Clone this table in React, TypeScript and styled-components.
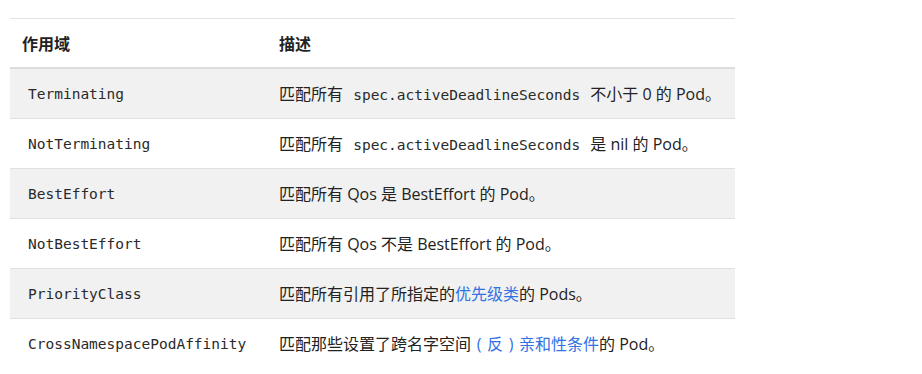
import React from 'react';
import styled, { createGlobalStyle } from 'styled-components';

const GlobalStyle = createGlobalStyle`
  body {
    margin: 0;
    background: #fff;
    color: #222;
    font-family: "Open Sans", "Noto Sans CJK SC", sans-serif;
    font-size: 16px;
  }
`;

const Page = styled.div`
  padding: 18px 0 0 10px;
`;

const Table = styled.table`
  width: 725px;
  border-collapse: collapse;
  border-top: 1px solid #e3e3e6;
`;

const HeadCell = styled.th`
  height: 48px;
  padding: 0 12px;
  text-align: left;
  font-weight: 700;
  border-bottom: 2px solid #dcdde1;
  vertical-align: middle;
`;

const Row = styled.tr<{ $striped: boolean; $last: boolean }>`
  background: ${p => (p.$striped ? '#f1f1f1' : '#fff')};
  border-bottom: 1px solid ${p => (p.$last ? 'transparent' : '#dfe0e3')};
`;

const Cell = styled.td<{ $first?: boolean }>`
  height: 48px;
  padding: 0 12px 1px;
  vertical-align: middle;
  width: ${p => (p.$first ? '233px' : 'auto')};
  white-space: nowrap;
`;

const Code = styled.code`
  font-family: "DejaVu Sans Mono", monospace;
  font-size: 14.5px;
  padding: 0 6px;
  color: #2a2a2a;
`;

const Link = styled.a`
  color: #3371e3;
  text-decoration: none;
`;

const Paren = styled.span`
  display: inline-block;
  width: 1em;
  text-align: center;
`;

interface Scope {
  name: string;
  desc: React.ReactNode;
}

const scopes: Scope[] = [
  {
    name: 'Terminating',
    desc: <>匹配所有 <Code>spec.activeDeadlineSeconds</Code> 不小于 0 的 Pod。</>,
  },
  {
    name: 'NotTerminating',
    desc: <>匹配所有 <Code>spec.activeDeadlineSeconds</Code> 是 nil 的 Pod。</>,
  },
  { name: 'BestEffort', desc: <>匹配所有 Qos 是 BestEffort 的 Pod。</> },
  { name: 'NotBestEffort', desc: <>匹配所有 Qos 不是 BestEffort 的 Pod。</> },
  {
    name: 'PriorityClass',
    desc: <>匹配所有引用了所指定的<Link href="#">优先级类</Link>的 Pods。</>,
  },
  {
    name: 'CrossNamespacePodAffinity',
    desc: (
      <>
        匹配那些设置了跨名字空间
        <Link href="#">
          <Paren>(</Paren>反<Paren>)</Paren>亲和性条件
        </Link>
        的 Pod。
      </>
    ),
  },
];

export default function App(): React.ReactElement {
  return (
    <Page>
      <GlobalStyle />
      <Table>
        <thead>
          <tr>
            <HeadCell>作用域</HeadCell>
            <HeadCell>描述</HeadCell>
          </tr>
        </thead>
        <tbody>
          {scopes.map((s, i) => (
            <Row key={s.name} $striped={i % 2 === 0} $last={i === scopes.length - 1}>
              <Cell $first>
                <Code>{s.name}</Code>
              </Cell>
              <Cell>{s.desc}</Cell>
            </Row>
          ))}
        </tbody>
      </Table>
    </Page>
  );
}
